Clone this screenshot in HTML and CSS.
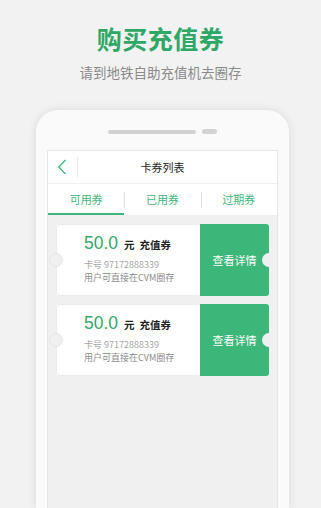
FILE: index.html
```html
<!DOCTYPE html>
<html lang="zh">
<head>
<meta charset="utf-8">
<link rel="stylesheet" href="styles.css">
</head>
<body>
<div class="page">
  <div class="hero">
    <h1 class="title">购买充值券</h1>
    <p class="subtitle">请到地铁自助充值机去圈存</p>
  </div>
  <div class="phone">
    <div class="speaker">
      <span class="speaker-bar"></span>
      <span class="speaker-dot"></span>
    </div>
    <div class="screen">
      <div class="navbar">
        <div class="back">
          <svg width="10" height="16" viewBox="0 0 10 16"><path d="M8.5 1 L1.8 8 L8.5 15" fill="none" stroke="#3db67a" stroke-width="1.3"/></svg>
        </div>
        <div class="nav-title">卡券列表</div>
      </div>
      <div class="tabs">
        <div class="tab active">可用券</div>
        <div class="tab">已用券</div>
        <div class="tab">过期券</div>
      </div>
      <div class="list">
        <div class="card">
          <div class="card-info">
            <div class="amount-line"><span class="amount">50.0</span><span class="unit">元</span><span class="kind">充值券</span></div>
            <div class="meta">卡号 97172888339</div>
            <div class="meta">用户可直接在CVM圈存</div>
          </div>
          <div class="card-action">查看详情</div>
          <span class="notch notch-left"></span>
          <span class="notch notch-right"></span>
        </div>
        <div class="card">
          <div class="card-info">
            <div class="amount-line"><span class="amount">50.0</span><span class="unit">元</span><span class="kind">充值券</span></div>
            <div class="meta">卡号 97172888339</div>
            <div class="meta">用户可直接在CVM圈存</div>
          </div>
          <div class="card-action">查看详情</div>
          <span class="notch notch-left"></span>
          <span class="notch notch-right"></span>
        </div>
      </div>
    </div>
  </div>
</div>
</body>
</html>
```
FILE: styles.css
```css
* { box-sizing: border-box; margin: 0; padding: 0; }
html, body { width: 321px; height: 508px; overflow: hidden; }
body {
  background: #f2f2f2;
  font-family: "Noto Sans CJK SC", "Noto Sans", sans-serif;
}
.page { display: flex; flex-direction: column; height: 508px; }
.hero { display: flex; flex-direction: column; align-items: center; padding-top: 22px; }
.title {
  font-size: 25px; line-height: 32px; font-weight: 700; color: #2fa866; letter-spacing: 0.5px;
}
.subtitle {
  margin-top: 10px; font-size: 13.5px; line-height: 16px; color: #8a8a8a;
}
.phone {
  margin: 30px 32px 0 36px;
  flex: 1;
  background: #fafafa;
  border-radius: 22px 22px 0 0;
  box-shadow: 0 0 10px rgba(0,0,0,0.10);
  padding: 0 11px;
  display: flex; flex-direction: column;
}
.speaker { height: 40px; display: flex; align-items: center; justify-content: center; gap: 6px; padding-top: 3px; }
.speaker-bar { width: 88px; height: 4px; border-radius: 2px; background: #d2d2d2; }
.speaker-dot { width: 15px; height: 5px; border-radius: 3px; background: #d2d2d2; }
.screen { flex: 1; background: #f0f0f0; border: 1px solid #e8e8e8; border-bottom: none; }
.navbar { height: 33px; background: #fff; display: flex; align-items: center; border-bottom: 1px solid #f0f0f0; position: relative; }
.back { width: 30px; height: 20px; display: flex; align-items: center; justify-content: center; border-right: 1px solid #e6e6e6; padding-right: 2px; }
.nav-title { position: absolute; left: 0; right: 0; text-align: center; font-size: 11px; color: #222; pointer-events: none; }
.tabs { height: 31px; background: #fff; display: flex; }
.tab { flex: 1; display: flex; align-items: center; justify-content: center; font-size: 11px; color: #3db67a; position: relative; border-bottom: 2px solid transparent; }
.tab + .tab::before { content: ""; position: absolute; left: 0; top: 8px; height: 16px; width: 1px; background: #dedede; }
.tab.active { border-bottom-color: #3db67a; }
.list { padding: 9px 8px; display: flex; flex-direction: column; gap: 8px; }
.card { height: 72px; background: #fff; border-radius: 3px; display: flex; position: relative; border: 1px solid #ebebeb; }
.card-info { flex: 1; padding: 8px 0 0 27px; }
.amount-line { display: flex; align-items: baseline; height: 22px; }
.amount { font-family: "Liberation Sans", Arial, sans-serif; font-size: 17.5px; color: #2fa866; }
.unit { font-size: 10.5px; font-weight: 700; color: #222; margin-left: 6px; }
.kind { font-size: 10.5px; font-weight: 700; color: #222; margin-left: 5px; }
.meta { font-size: 9px; line-height: 13px; color: #8a8a8a; }
.amount-line + .meta { margin-top: 3px; color: #a5a5a5; }
.card-action { width: 69px; margin: -1px -1px -1px 0; background: #3db67a; border-radius: 0 3px 3px 0; color: #fff; font-size: 11px; display: flex; align-items: center; justify-content: center; }
.notch { position: absolute; top: 50%; width: 14px; height: 14px; margin-top: -7px; border-radius: 50%; background: #f0f0f0; }
.notch-left { left: -8px; border: 1px solid #e6e6e6; }
.notch-right { right: -8px; }
```
